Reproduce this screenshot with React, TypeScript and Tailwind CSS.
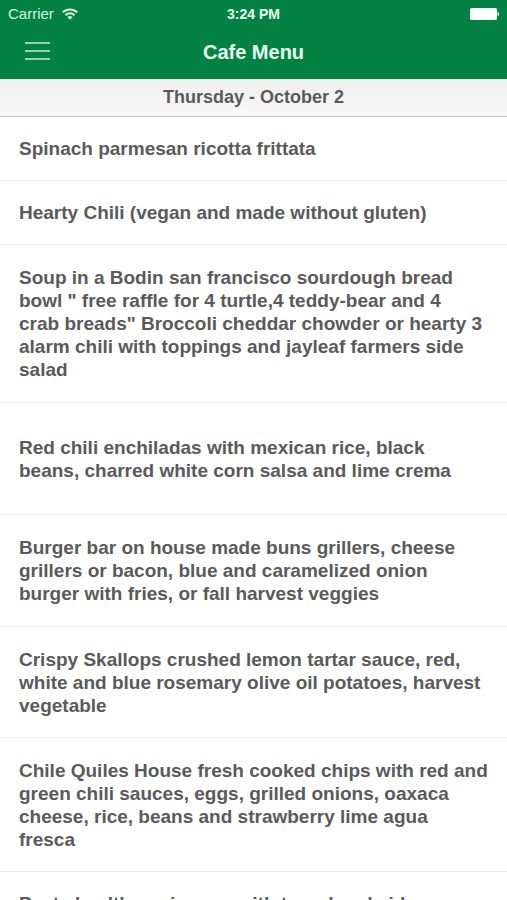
import React from "react";
import clsx from "clsx";

interface MenuItem {
  text: string;
  height: string;
}

const MENU_ITEMS: MenuItem[] = [
  { text: "Spinach parmesan ricotta frittata", height: "min-h-16" },
  { text: "Hearty Chili (vegan and made without gluten)", height: "min-h-16" },
  {
    text: 'Soup in a Bodin san francisco sourdough bread bowl " free raffle for 4 turtle,4 teddy-bear and 4 crab\u00a0breads" Broccoli cheddar chowder or hearty 3 alarm chili with toppings and jayleaf farmers side salad',
    height: "min-h-[158px]",
  },
  {
    text: "Red chili enchiladas with mexican rice, black beans, charred white corn salsa and lime crema",
    height: "min-h-28",
  },
  {
    text: "Burger bar on house made buns grillers, cheese grillers or bacon, blue and caramelized onion burger with fries, or fall harvest veggies",
    height: "min-h-28",
  },
  {
    text: "Crispy Skallops crushed lemon tartar sauce, red, white and blue rosemary olive oil potatoes, harvest vegetable",
    height: "min-h-[111px]",
  },
  {
    text: "Chile Quiles House fresh cooked chips with red and green chili sauces, eggs, grilled onions, oaxaca cheese, rice, beans and strawberry lime agua fresca",
    height: "min-h-[134px]",
  },
  { text: "Pasta healthy union are with tunod and side", height: "min-h-16" },
];

function WifiIcon() {
  return (
    <svg width="16" height="12" viewBox="0 0 16 12" fill="none" stroke="currentColor" strokeWidth="2" aria-hidden="true">
      <path d="M.8 4.4a10.2 10.2 0 0 1 14.4 0" />
      <path d="M3.5 7.2a6.4 6.4 0 0 1 9 0" />
      <path d="M8 11.8 5.4 9.2a3.7 3.7 0 0 1 5.2 0Z" fill="currentColor" stroke="none" />
    </svg>
  );
}

function BatteryIcon() {
  return (
    <svg width="30" height="12" viewBox="0 0 30 12" fill="currentColor" aria-hidden="true">
      <rect x="1" width="27" height="12" rx="1.5" />
      <path d="M28.6 3.8c1.9.6 1.9 3.8 0 4.4Z" />
    </svg>
  );
}

function StatusBar() {
  return (
    <div className="grid h-7 grid-cols-3 items-center px-2 text-sm">
      <div className="flex items-center gap-2 text-[#d5f3df]">
        <span className="text-[15px]">Carrier</span>
        <WifiIcon />
      </div>
      <span className="text-center font-bold">3:24 PM</span>
      <div className="flex justify-end text-white">
        <BatteryIcon />
      </div>
    </div>
  );
}

function NavBar() {
  return (
    <div className="grid grid-cols-[1fr_auto_1fr] items-center px-6 pb-1.5">
      <button type="button" aria-label="Open menu" className="w-7 text-[#8fd3aa]">
        <svg width="26" height="20" viewBox="0 0 26 20" stroke="currentColor" strokeWidth="2" aria-hidden="true">
          <path d="M1 2h25M1 10h25M1 18h25" />
        </svg>
      </button>
      <h1 className="pt-2.5 pb-1.5 text-xl leading-[29px] font-bold">Cafe Menu</h1>
    </div>
  );
}

export default function App() {
  return (
    <div className="flex h-screen flex-col bg-white font-['Liberation_Sans',Arial,sans-serif] text-[#5a5a5a]">
      <header className="shrink-0 bg-[#048243] text-[#e8fff0]">
        <StatusBar />
        <NavBar />
      </header>
      <main className="min-h-0 flex-1 overflow-y-auto [scrollbar-width:none]">
        <h2 className="border-b border-[#c8c8c8] bg-linear-to-b from-[#eeeeee] to-[#f8f8f8] pt-1.5 pb-[7px] text-center text-lg leading-6 font-bold">
          Thursday - October 2
        </h2>
        <ul>
          {MENU_ITEMS.map((item) => (
            <li
              key={item.text}
              className={clsx("flex items-center border-b border-[#ececec] px-[19px] text-[19px] leading-[23px] font-bold", item.height)}
            >
              {item.text}
            </li>
          ))}
        </ul>
      </main>
    </div>
  );
}
